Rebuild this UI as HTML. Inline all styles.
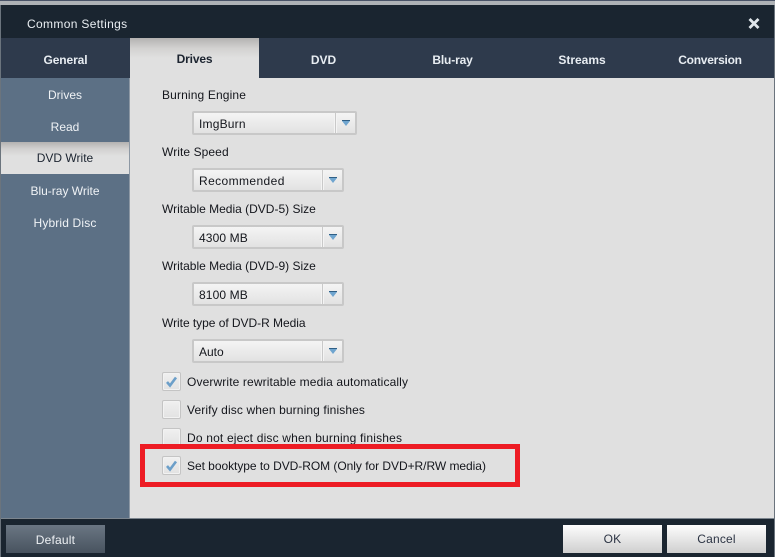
<!DOCTYPE html>
<html><head><meta charset="utf-8"><style>
html,body{margin:0;padding:0}
body{width:775px;height:557px;position:relative;overflow:hidden;background:#1a2530;font-family:"Liberation Sans",Arial,sans-serif;font-size:12px}
div{position:absolute;box-sizing:border-box}
.t{line-height:16px;white-space:nowrap}
.tab{top:38px;height:40px;line-height:44px;text-align:center;color:#e8edf2;font-weight:bold;font-size:12px}
.side{left:1px;width:128px;height:32px;line-height:32px;text-align:center;color:#f0f3f6}
.lb{left:162px;color:#14161c;line-height:16px;white-space:nowrap}
.sel{left:192px;height:24px;background:linear-gradient(#f4f4f4,#e2e2e2);border:2px solid #c8c8c8;border-radius:2px}
.sel .n{left:5px;top:3px;line-height:16px;color:#14161c;white-space:nowrap}
.sel .s{top:0;bottom:0;width:3px;background:#c9c9c9;border-left:1px solid #f4f4f4;border-right:1px solid #f4f4f4}
.sel svg{position:absolute;top:7px}
.cb{left:162px;width:19px;height:19px;background:linear-gradient(#f0f0f0,#e2e2e2);border:1px solid #c4c4c4;border-radius:2px;box-shadow:inset 0 0 0 1px #f2f2f2}
.cb svg{position:absolute;left:2px;top:2px}
.btn{top:525px;width:99px;height:28px;line-height:29px;text-align:center;letter-spacing:.2px}
.w{background:linear-gradient(#fdfdfd,#cfcfcf);color:#2c3444}
</style></head><body>
<div style="left:0;top:0;width:775px;height:1px;background:#4a5468"></div>
<div style="left:0;top:1px;width:775px;height:4px;background:#aeb2b6"></div>
<div style="left:0;top:5px;width:1px;height:552px;background:#6b747d"></div>
<div style="left:774px;top:5px;width:1px;height:552px;background:#6b747d"></div>
<div style="left:1px;top:5px;width:773px;height:33px;background:#1a2530"></div>
<div class="t" style="left:27px;top:16px;color:#e9eef2;letter-spacing:.34px">Common Settings</div>
<svg style="position:absolute;left:748px;top:18px" width="12" height="11" viewBox="0 0 12 11"><path d="M1.5 1 L10.5 10 M10.5 1 L1.5 10" stroke="#dfe5ea" stroke-width="2.8" fill="none"/></svg>

<div style="left:1px;top:38px;width:773px;height:40px;background:#2e3a4c"></div>
<div class="tab" style="left:1px;width:129px;letter-spacing:-.1px">General</div>
<div class="tab" style="left:130px;width:129px;background:linear-gradient(#b4b2b1 0,#d2d1d0 10px,#e0e0e0 20px,#e0e0e0 100%);color:#1c2430;line-height:42px;letter-spacing:-.15px">Drives</div>
<div class="tab" style="left:259px;width:129px">DVD</div>
<div class="tab" style="left:388px;width:129px;letter-spacing:-.15px">Blu-ray</div>
<div class="tab" style="left:517px;width:130px">Streams</div>
<div class="tab" style="left:647px;width:126px;letter-spacing:-.25px">Conversion</div>

<div style="left:1px;top:78px;width:128px;height:440px;background:#5c7085"></div>
<div style="left:129px;top:78px;width:1px;height:440px;background:#8d98a4"></div>
<div style="left:130px;top:78px;width:644px;height:440px;background:#e0e0e0"></div>
<div class="side" style="top:79px">Drives</div>
<div class="side" style="top:111px">Read</div>
<div class="side" style="top:142px;background:linear-gradient(#b4b2b1 0,#d2d1d0 7px,#e0e0e0 14px,#e0e0e0 100%);color:#1c2430;height:32px">DVD Write</div>
<div class="side" style="top:175px">Blu-ray Write</div>
<div class="side" style="top:207px;letter-spacing:.15px">Hybrid Disc</div>

<div class="lb" style="top:87px;letter-spacing:.14px">Burning Engine</div>
<div class="sel" style="top:111px;width:165px"><div class="n" style="letter-spacing:.2px">ImgBurn</div><div class="s" style="left:140px"></div><svg style="left:148px" width="8" height="6" viewBox="0 0 8 6"><path d="M0 0H8V1L4 6 0 1Z" fill="#6fa5cf"/><path d="M0 0H8V1H0Z" fill="#2f5f86"/></svg></div>
<div class="lb" style="top:144px;letter-spacing:.08px">Write Speed</div>
<div class="sel" style="top:168px;width:152px"><div class="n" style="letter-spacing:.4px">Recommended</div><div class="s" style="left:127px"></div><svg style="left:135px" width="8" height="6" viewBox="0 0 8 6"><path d="M0 0H8V1L4 6 0 1Z" fill="#6fa5cf"/><path d="M0 0H8V1H0Z" fill="#2f5f86"/></svg></div>
<div class="lb" style="top:201px">Writable Media (DVD-5) Size</div>
<div class="sel" style="top:225px;width:152px"><div class="n" style="letter-spacing:.12px">4300 MB</div><div class="s" style="left:127px"></div><svg style="left:135px" width="8" height="6" viewBox="0 0 8 6"><path d="M0 0H8V1L4 6 0 1Z" fill="#6fa5cf"/><path d="M0 0H8V1H0Z" fill="#2f5f86"/></svg></div>
<div class="lb" style="top:258px">Writable Media (DVD-9) Size</div>
<div class="sel" style="top:282px;width:152px"><div class="n" style="letter-spacing:.12px">8100 MB</div><div class="s" style="left:127px"></div><svg style="left:135px" width="8" height="6" viewBox="0 0 8 6"><path d="M0 0H8V1L4 6 0 1Z" fill="#6fa5cf"/><path d="M0 0H8V1H0Z" fill="#2f5f86"/></svg></div>
<div class="lb" style="top:315px;letter-spacing:-.04px">Write type of DVD-R Media</div>
<div class="sel" style="top:339px;width:152px"><div class="n">Auto</div><div class="s" style="left:127px"></div><svg style="left:135px" width="8" height="6" viewBox="0 0 8 6"><path d="M0 0H8V1L4 6 0 1Z" fill="#6fa5cf"/><path d="M0 0H8V1H0Z" fill="#2f5f86"/></svg></div>

<div class="cb" style="top:372px"><svg width="13" height="13" viewBox="0 0 13 13"><path d="M2 7 L5 10.5 L11 2.5" stroke="#6c9fc9" stroke-width="2.6" fill="none"/></svg></div>
<div class="lb" style="left:187px;top:374px;letter-spacing:.125px">Overwrite rewritable media automatically</div>
<div class="cb" style="top:400px"></div>
<div class="lb" style="left:187px;top:402px;letter-spacing:.12px">Verify disc when burning finishes</div>
<div class="cb" style="top:428px"></div>
<div class="lb" style="left:187px;top:430px;letter-spacing:.18px">Do not eject disc when burning finishes</div>
<div style="left:140px;top:444px;width:380px;height:43px;border:5px solid #ed1c24"></div>
<div class="cb" style="top:456px"><svg width="13" height="13" viewBox="0 0 13 13"><path d="M2 7 L5 10.5 L11 2.5" stroke="#6c9fc9" stroke-width="2.6" fill="none"/></svg></div>
<div class="lb" style="left:187px;top:458px;letter-spacing:-.04px">Set booktype to DVD-ROM (Only for DVD+R/RW media)</div>

<div style="left:1px;top:518px;width:773px;height:1px;background:#7c858e"></div>
<div class="btn" style="left:6px;background:linear-gradient(#6a7683,#48535f);color:#eef1f4;line-height:30px">Default</div>
<div class="btn w" style="left:563px">OK</div>
<div class="btn w" style="left:667px">Cancel</div>
</body></html>
